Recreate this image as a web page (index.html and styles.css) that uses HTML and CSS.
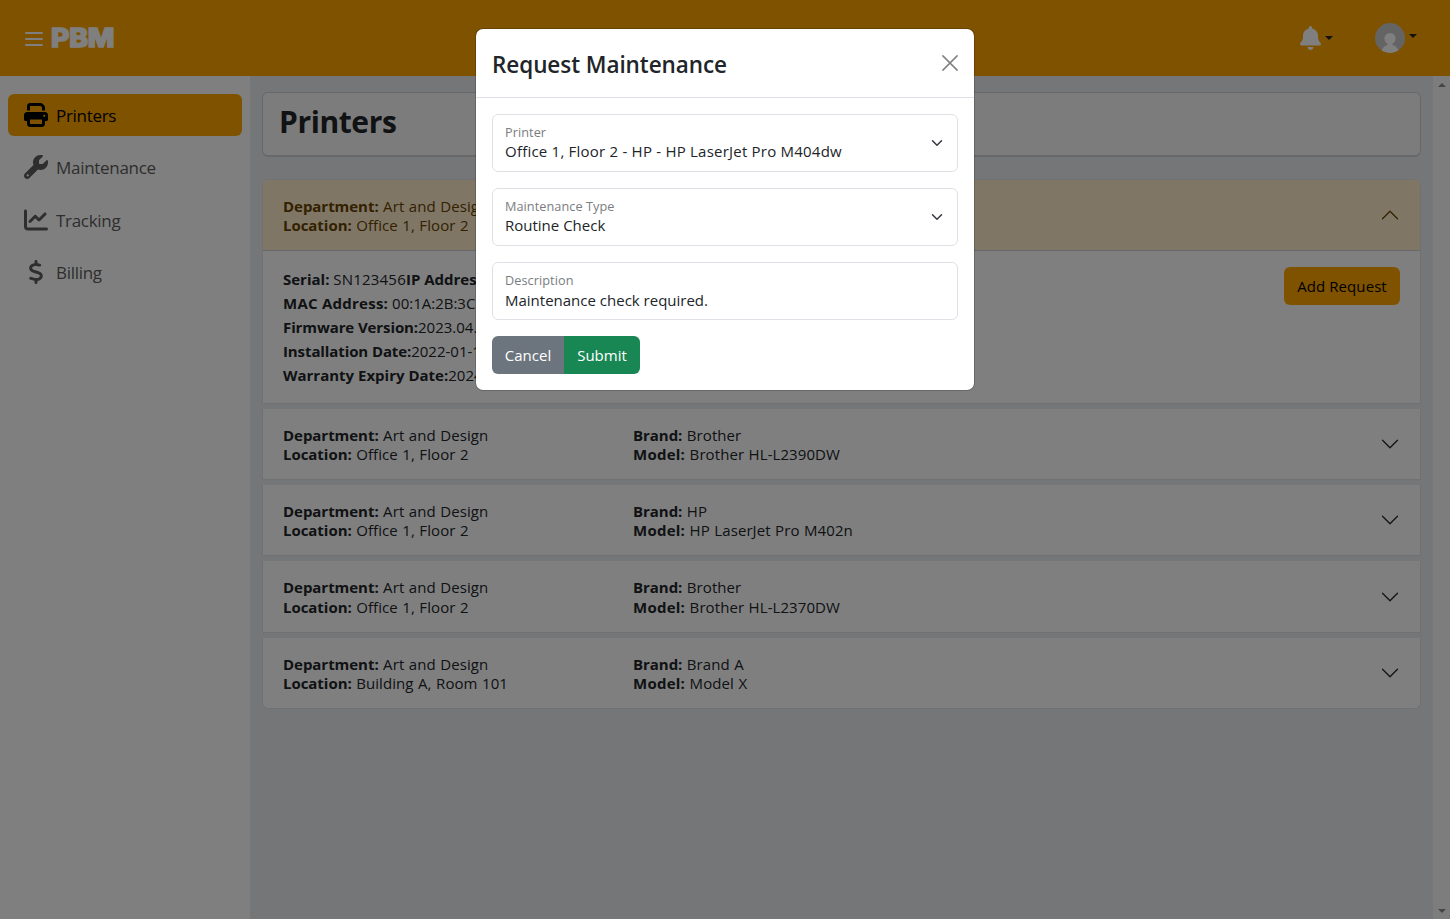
FILE: index.html
```html
<!DOCTYPE html>
<html lang="en">
<head>
<meta charset="utf-8">
<title>PBM - Printers</title>
<link rel="stylesheet" href="styles.css">
</head>
<body>
<div class="app">
  <header class="topbar">
    <div class="brand">
      <svg class="burger" viewBox="0 0 18 16"><path d="M1 2h16M1 8h16M1 14h16"/></svg>
      <span class="logo">PBM</span>
    </div>
    <div class="tools">
      <div class="tool"><svg class="bell" viewBox="0 0 448 512"><path d="M224 0c-17.700 0-32 14.300-32 32v19.200C119 66 64 130.600 64 208v18.800c0 47-17.300 92.400-48.500 127.600l-7.400 8.300c-8.400 9.400-10.400 22.900-5.300 34.400S19.400 416 32 416h384c12.600 0 24-7.400 29.200-18.900s3.100-25-5.300-34.400l-7.400-8.300C401.300 319.200 384 273.900 384 226.800V208c0-77.400-55-142-128-156.800V32c0-17.700-14.300-32-32-32zm45.300 493.300c12-12 18.700-28.300 18.700-45.300H160c0 17 6.700 33.300 18.700 45.300S207 512 224 512s33.300-6.700 45.300-18.700z"/></svg><i class="caret"></i></div>
      <div class="tool"><svg class="avatar" viewBox="0 0 30 30"><defs><clipPath id="round"><circle cx="15" cy="15" r="15"/></clipPath></defs><g clip-path="url(#round)"><path fill="#c8c8c8" d="M0 0h30v30H0z"/><circle cx="15" cy="15.500" r="5.600" fill="#fff"/><path fill="#fff" d="M12.500 18h5v4c4 1 6 4 6 8h-17c0-4 2-7 6-8z"/></g></svg><i class="caret raised"></i></div>
    </div>
  </header>
  <div class="columns">
    <nav class="sidebar">
      <a class="nav-item active"><svg viewBox="0 0 512 512"><path d="M128 0C92.700 0 64 28.700 64 64v96h64V64h226.700L384 93.300V160h64V93.300c0-17-6.700-33.300-18.700-45.300L400 18.700C388 6.700 371.700 0 354.700 0H128zm256 352v96H128v-96h256zm64 32h32c17.700 0 32-14.300 32-32v-96c0-35.300-28.700-64-64-64H64c-35.300 0-64 28.700-64 64v96c0 17.700 14.300 32 32 32h32v64c0 35.300 28.700 64 64 64h256c35.300 0 64-28.700 64-64v-64zM432 248a24 24 0 1 1 0 48 24 24 0 1 1 0-48z"/></svg><span>Printers</span></a>
      <a class="nav-item"><svg viewBox="0 0 512 512"><path d="M352 320c88.400 0 160-71.600 160-160 0-15.300-2.200-30.100-6.200-44.200-3.100-10.800-16.400-13.200-24.300-5.300l-76.800 76.800c-3 3-7.100 4.700-11.300 4.700H336c-8.800 0-16-7.200-16-16v-57.400c0-4.200 1.700-8.300 4.700-11.300l76.800-76.800c7.900-7.900 5.400-21.200-5.300-24.300C382.100 2.200 367.300 0 352 0c-88.400 0-160 71.600-160 160 0 19.100 3.400 37.500 9.500 54.500L19.900 396.100C7.200 408.800 0 426.100 0 444.100 0 481.600 30.400 512 67.900 512c18 0 35.300-7.200 48-19.900l181.600-181.600c17 6.200 35.400 9.500 54.500 9.500zM80 408a24 24 0 1 1 0 48 24 24 0 1 1 0-48z"/></svg><span>Maintenance</span></a>
      <a class="nav-item"><svg viewBox="0 0 512 512"><path d="M64 64c0-17.700-14.300-32-32-32S0 46.300 0 64v336c0 44.200 35.800 80 80 80h400c17.700 0 32-14.300 32-32s-14.300-32-32-32H80c-8.800 0-16-7.200-16-16V64zm406.600 86.600c12.500-12.500 12.500-32.800 0-45.300s-32.800-12.500-45.300 0L320 210.700l-57.400-57.300c-12.500-12.500-32.800-12.500-45.300 0l-112 112c-12.500 12.500-12.500 32.800 0 45.300s32.800 12.500 45.300 0L240 221.300l57.400 57.400c12.500 12.500 32.800 12.500 45.300 0l128-128z"/></svg><span>Tracking</span></a>
      <a class="nav-item"><svg viewBox="-96 0 512 512"><path d="M160 0c17.700 0 32 14.300 32 32v35.700c1.600.2 3.100.4 4.700.7.400.1.700.1 1.100.2l48 8.800c17.400 3.200 28.900 19.900 25.700 37.200s-19.900 28.900-37.200 25.700l-47.500-8.700c-31.300-4.600-58.900-1.500-78.300 6.200s-27.200 18.300-29 28.100c-2 10.700-.5 16.700 1.200 20.400 1.800 3.900 5.500 8.300 12.800 13.200 16.300 10.700 41.300 17.700 73.700 26.300l2.900.8c28.600 7.600 63.600 16.800 89.600 33.800 14.200 9.300 27.600 21.900 35.900 39.500 8.500 17.900 10.300 37.900 6.400 59.200-6.900 38-33.100 63.400-65.600 76.700-13.700 5.600-28.600 9.200-44.400 11V480c0 17.700-14.300 32-32 32s-32-14.300-32-32v-34.900c-.4-.1-.9-.1-1.300-.2h-.2c-24.400-3.800-64.500-14.300-91.500-26.300-16.100-7.200-23.400-26.100-16.200-42.200s26.100-23.400 42.200-16.200c20.900 9.300 55.300 18.500 75.200 21.600 31.900 4.700 58.200 2 76-5.300 16.900-6.900 24.600-16.900 26.800-28.900 1.900-10.600.4-16.700-1.300-20.400-1.900-4-5.600-8.400-13-13.300-16.400-10.700-41.500-17.700-74-26.300l-2.800-.7c-28.600-7.600-63.700-16.900-89.700-33.900-14.200-9.300-27.500-22-35.800-39.600-8.400-17.900-10.100-37.900-6.100-59.200C23.700 116 52.300 91.200 84.800 78.300c13.300-5.300 27.900-8.900 43.200-11V32c0-17.700 14.300-32 32-32z"/></svg><span>Billing</span></a>
    </nav>
    <main class="main">
      <div class="title-card"><h1>Printers</h1></div>
      <section class="accordion">
        <article class="item">
          <div class="item-head open"><p><b>Department:</b> Art and Design<br><b>Location:</b> Office 1, Floor 2</p><p><b>Brand:</b> HP<br><b class="wide">Model:</b> HP LaserJet Pro M404dw</p><svg class="chev up" viewBox="0 0 16 16"><path d="M2 5l6 6 6-6"/></svg></div>
          <div class="item-body">
            <div class="details">
              <div><b>Serial:</b> <span class="serial">SN123456</span><b>IP Address:</b></div>
              <div><b class="wide">MAC Address:</b> 00:1A:2B:3C:4D</div>
              <div><b class="tight">Firmware Version:</b>2023.04.1</div>
              <div><b class="tight">Installation Date:</b>2022-01-15</div>
              <div><b>Warranty Expiry Date:</b>2024-01</div>
            </div>
            <button class="add">Add Request</button>
          </div>
        </article>
        <article class="item"><div class="item-head"><p><b>Department:</b> Art and Design<br><b>Location:</b> Office 1, Floor 2</p><p><b>Brand:</b> Brother<br><b class="wide">Model:</b> Brother HL-L2390DW</p><svg class="chev" viewBox="0 0 16 16"><path d="M2 5l6 6 6-6"/></svg></div></article>
        <article class="item"><div class="item-head"><p><b>Department:</b> Art and Design<br><b>Location:</b> Office 1, Floor 2</p><p><b>Brand:</b> HP<br><b class="wide">Model:</b> HP LaserJet Pro M402n</p><svg class="chev" viewBox="0 0 16 16"><path d="M2 5l6 6 6-6"/></svg></div></article>
        <article class="item"><div class="item-head"><p><b>Department:</b> Art and Design<br><b>Location:</b> Office 1, Floor 2</p><p><b>Brand:</b> Brother<br><b class="wide">Model:</b> Brother HL-L2370DW</p><svg class="chev" viewBox="0 0 16 16"><path d="M2 5l6 6 6-6"/></svg></div></article>
        <article class="item"><div class="item-head"><p><b>Department:</b> Art and Design<br><b>Location:</b> Building A, Room 101</p><p><b>Brand:</b> Brand A<br><b class="wide">Model:</b> Model X</p><svg class="chev" viewBox="0 0 16 16"><path d="M2 5l6 6 6-6"/></svg></div></article>
      </section>
    </main>
    <div class="scrollbar"><i class="arrow-up"></i><i class="arrow-down"></i></div>
  </div>
</div>
<div class="backdrop">
  <div class="modal">
    <div class="modal-head"><h2>Request Maintenance</h2><svg class="close" viewBox="0 0 16 16"><path d="M.9.900l14.200 14.200M15.100.9L.9 15.100"/></svg></div>
    <form class="modal-body">
      <div class="field"><label>Printer</label><div class="value spaced">Office 1, Floor 2 - HP - HP LaserJet Pro M404dw</div><svg class="select-chev" viewBox="0 0 16 16"><path d="M2 5l6 6 6-6"/></svg></div>
      <div class="field"><label>Maintenance Type</label><div class="value">Routine Check</div><svg class="select-chev" viewBox="0 0 16 16"><path d="M2 5l6 6 6-6"/></svg></div>
      <div class="field text"><label>Description</label><div class="value">Maintenance check required.</div></div>
      <div class="buttons"><span class="btn cancel">Cancel</span><span class="btn submit">Submit</span></div>
    </form>
  </div>
</div>
</body>
</html>
```
FILE: styles.css
```css
* { box-sizing: border-box; }
body {
  margin: 0;
  height: 919px;
  overflow: hidden;
  font-family: "Open Sans", "Noto Sans", sans-serif;
  font-size: 15px;
  line-height: 24px;
  color: #212529;
}
h1, h2, p { margin: 0; }
svg { display: block; flex: none; }
.app { display: flex; flex-direction: column; height: 919px; }

.topbar {
  display: flex;
  justify-content: space-between;
  align-items: center;
  height: 76px;
  padding: 0 33px 0 25px;
  background: #ffa500;
}
.brand { display: flex; align-items: center; gap: 8px; }
.burger { width: 18px; height: 16px; margin-top: 2px; fill: none; stroke: #fff; stroke-width: 2; stroke-linecap: round; }
.logo {
  font: 800 26px/30px "Inter", sans-serif;
  color: #fff;
  letter-spacing: -.3px;
  -webkit-text-stroke: 1.400px #fff;
  transform: scaleX(1.090);
  transform-origin: left;
}
.tools { display: flex; gap: 42px; }
.tool { display: flex; align-items: center; gap: 4px; }
.bell { width: 21px; height: 24px; fill: #fff; }
.avatar { width: 30px; height: 30px; }
.caret { border: 4px solid transparent; border-top-color: #212529; border-bottom: 0; }
.caret.raised { margin-bottom: 4px; }

.columns { display: flex; flex: 1; min-height: 0; }
.sidebar { width: 250px; background: #fff; padding: 18px 8px; display: flex; flex-direction: column; gap: 10.300px; }
.nav-item {
  display: flex;
  align-items: center;
  gap: 8px;
  height: 42px;
  padding: 0 16px;
  border-radius: 6px;
  font-size: 17px;
  letter-spacing: -.3px;
  color: #5c5c5c;
}
.nav-item span { padding-top: 2px; }
.nav-item svg { width: 24px; height: 24px; fill: currentColor; }
.nav-item.active { background: #ffa500; color: #000; }
.main { flex: 1; padding: 16px 12px; background: #e9ecef; min-width: 0; overflow: hidden; }
.title-card {
  height: 65px;
  padding: 10px 16px;
  background: #f8f8f8;
  border: 1px solid #d0d0d2;
  border-bottom-width: 2px;
  border-radius: 6px;
}
h1 { font-size: 30px; line-height: 38px; font-weight: 700; letter-spacing: -.4px; }
.accordion { padding-top: 22px; }
.item { background: #fff; border: 1px solid #dee2e6; border-top: 0; margin-bottom: 5px; }
.item:first-child { border-top: 1px solid #dee2e6; border-radius: 6px 6px 0 0; overflow: hidden; }
.item:last-child { border-radius: 0 0 6px 6px; }
.item-head {
  display: grid;
  grid-template-columns: 350px 1fr 20px;
  align-items: center;
  height: 70.400px;
  padding: 0 20px;
  line-height: 19.200px;
}
.item-head p { padding-top: 2px; word-spacing: .5px; letter-spacing: .08px; }
.item-head b { letter-spacing: -.04px; }
.item-head b.wide, b.wide { letter-spacing: .25px; }
b.tight { letter-spacing: -.1px; }
.serial { letter-spacing: .2px; }
.item-head.open { height: 71.400px; background: #ffedcc; color: #664200; border-bottom: 1px solid #ccd0d4; }
.chev { width: 20px; height: 20px; fill: none; stroke: #212529; stroke-width: 1; stroke-linecap: round; stroke-linejoin: round; }
.chev.up { transform: rotate(180deg); stroke: #664200; }
.item-body { display: flex; justify-content: space-between; align-items: flex-start; padding: 16px 20px; height: 151.300px; }
.add {
  width: 116px;
  height: 38px;
  padding: 0;
  border: 0;
  border-radius: 6px;
  background: #ffa500;
  color: #000;
  font: inherit;
  letter-spacing: .08px;
}
.scrollbar { width: 17px; background: #fafafa; display: flex; flex-direction: column; justify-content: space-between; align-items: center; padding: 7px 0 6px; }
.arrow-up { border: 4px solid transparent; border-bottom-color: #8b8b8b; border-top: 0; }
.arrow-down { border: 4px solid transparent; border-top-color: #8b8b8b; border-bottom: 0; }

.backdrop { position: absolute; inset: 0; background: rgba(0, 0, 0, .5); padding-top: 28px; }
.modal {
  width: 500px;
  margin: 0 auto;
  background: #fff;
  background-clip: padding-box;
  border: 1px solid rgba(0, 0, 0, .175);
  border-radius: 8px;
}
.modal-head { display: flex; justify-content: space-between; align-items: center; height: 69px; padding: 0 16px; border-bottom: 1px solid #dee2e6; }
h2 { padding-top: 3px; font-size: 22.500px; line-height: 36px; font-weight: 600; letter-spacing: -.07px; }
.close { width: 16px; height: 16px; fill: none; stroke: #808080; stroke-width: 1.5; stroke-linecap: round; }
.modal-body { display: flex; flex-direction: column; gap: 16px; padding: 16px; }
.field {
  display: grid;
  grid-template: 19px 20px / 1fr 16px;
  align-content: start;
  height: 58px;
  padding: 7px 10px 0 12px;
  border: 1px solid #dee2e6;
  border-radius: 6px;
  line-height: 20px;
}
.field.text { grid-template-rows: 20px 20px; }
.field label { font-size: 12.700px; letter-spacing: .07px; color: #7a7d80; }
.value { grid-row: 2; }
.spaced { letter-spacing: .22px; }
.select-chev { grid-column: 2; grid-row: 1 / 3; align-self: center; margin-top: 2px; width: 12px; height: 12px; fill: none; stroke: #343a40; stroke-width: 2; stroke-linecap: round; stroke-linejoin: round; }
.buttons { display: flex; }
.btn { height: 38px; line-height: 38px; text-align: center; color: #fff; }
.cancel { width: 72px; background: #6c757d; border-radius: 6px 0 0 6px; }
.submit { width: 76px; background: #198754; border-radius: 0 6px 6px 0; }
```
